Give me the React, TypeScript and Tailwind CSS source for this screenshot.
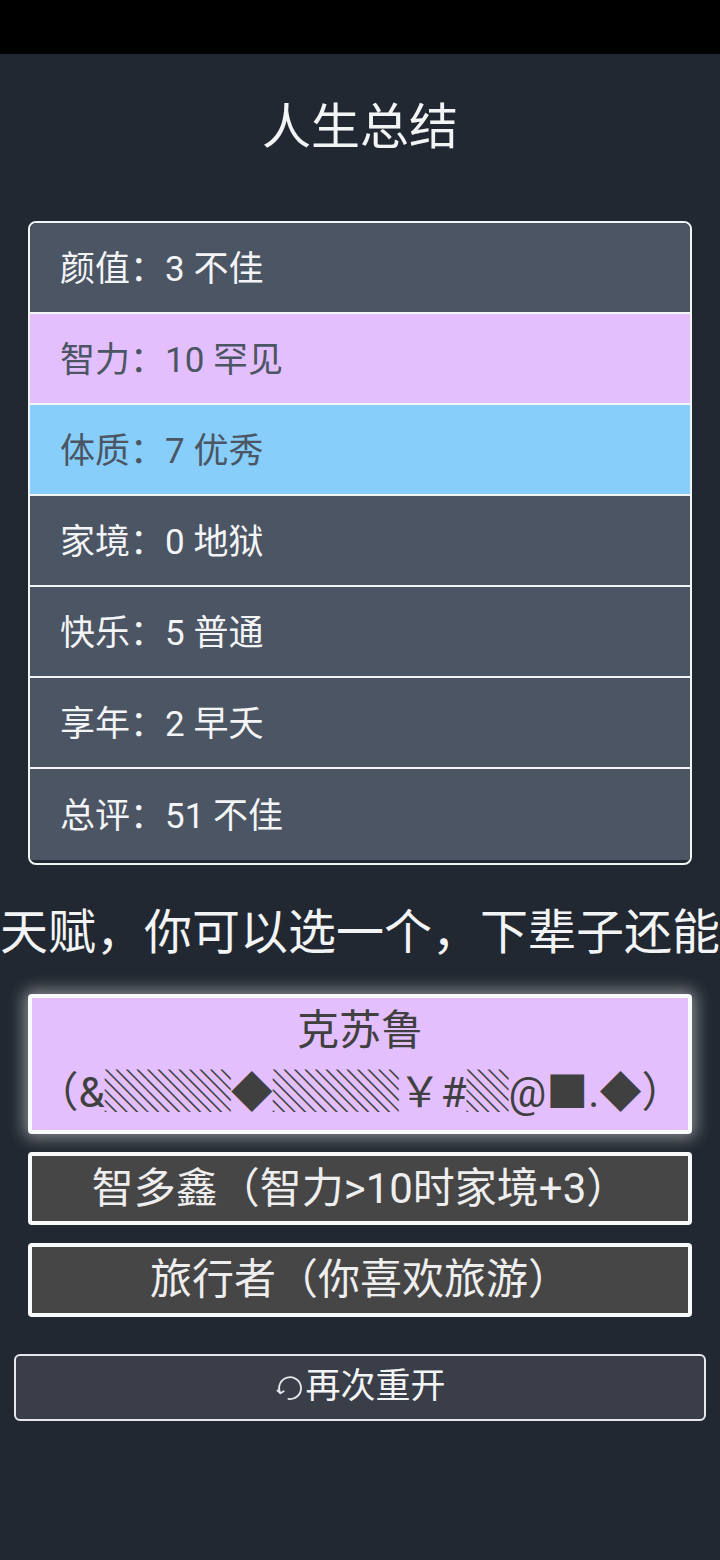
import React from "react";

const FONT = { fontFamily: 'Roboto, "Noto Sans CJK SC", sans-serif' };

const stats = [
  { label: "颜值", value: "3 不佳", bg: "bg-[#4b5563]", text: "text-[#f3f4f6]" },
  { label: "智力", value: "10 罕见", bg: "bg-[#e3c0fd]", text: "text-[#4b5563]" },
  { label: "体质", value: "7 优秀", bg: "bg-[#87cefa]", text: "text-[#4b5563]" },
  { label: "家境", value: "0 地狱", bg: "bg-[#4b5563]", text: "text-[#f3f4f6]" },
  { label: "快乐", value: "5 普通", bg: "bg-[#4b5563]", text: "text-[#f3f4f6]" },
  { label: "享年", value: "2 早夭", bg: "bg-[#4b5563]", text: "text-[#f3f4f6]" },
  { label: "总评", value: "51 不佳", bg: "bg-[#4b5563]", text: "text-[#f3f4f6]" },
];

function RestartIcon() {
  return (
    <svg width="30" height="30" viewBox="0 0 26 26" fill="none" stroke="#e5e7eb" strokeWidth="1.6" strokeLinecap="round">
      {/* open circle, arrow at lower left */}
      <path d="M5.5 17.5 A9.5 9.5 0 1 1 12.5 22.5" />
      <path d="M3 15.2 L5.5 17.5 L8.4 15.8" />
    </svg>
  );
}

export default function App() {
  return (
    <div className="min-h-[1560px] w-[720px] overflow-hidden bg-[#222831]" style={FONT}>
      <div className="h-[54px] bg-black" />

      <h1 className="pt-[38px] text-center text-[49px] leading-[72px] font-normal text-[#f3f4f6]">人生总结</h1>

      {/* stats list */}
      <div className="mx-[28px] mt-[57px] rounded-lg border-2 border-[#f3f4f6] pb-[3px] overflow-hidden">
        {stats.map((s, i) => (
          <div
            key={s.label}
            className={`h-[91px] flex items-center pt-[5px] pl-[30px] text-[35px] ${s.bg} ${s.text} ${i < stats.length - 1 ? "border-b-2 border-[#f3f4f6]" : ""}`}
          >
            {s.label}：{s.value}
          </div>
        ))}
      </div>

      <div className="mt-[32px] whitespace-nowrap text-center text-[48px] leading-[72px] text-[#f3f4f6]">
        天赋，你可以选一个，下辈子还能抽到它
      </div>

      {/* talents */}
      <div className="mx-[28px] mt-[25px] flex flex-col gap-[18px]">
        <div className="rounded-[4px] border-4 border-[#f9fafb] bg-[#e3c0fd] pt-[2px] pb-[6px] text-center text-[42px] leading-[62px] text-[#404040] shadow-[0_0_16px_4px_rgba(255,255,255,0.45)]">
          克苏鲁
          <br />
          （&amp;▒▒▒◆▒▒▒￥#▒@■.◆）
        </div>
        <div className="rounded-[4px] border-4 border-[#f9fafb] bg-[#464646] text-center text-[42px] leading-[65px] text-[#eeeeee]">
          智多鑫（智力&gt;10时家境+3）
        </div>
        <div className="rounded-[4px] border-4 border-[#f9fafb] bg-[#464646] text-center text-[42px] leading-[66px] text-[#eeeeee]">
          旅行者（你喜欢旅游）
        </div>
      </div>

      <div className="mx-[14px] mt-[37px] flex h-[67px] items-center justify-center gap-[1px] rounded-md border-2 border-[#e5e7eb] bg-[#393e48] text-[35px] text-[#f3f4f6]">
        <RestartIcon />
        <span>再次重开</span>
      </div>
    </div>
  );
}
